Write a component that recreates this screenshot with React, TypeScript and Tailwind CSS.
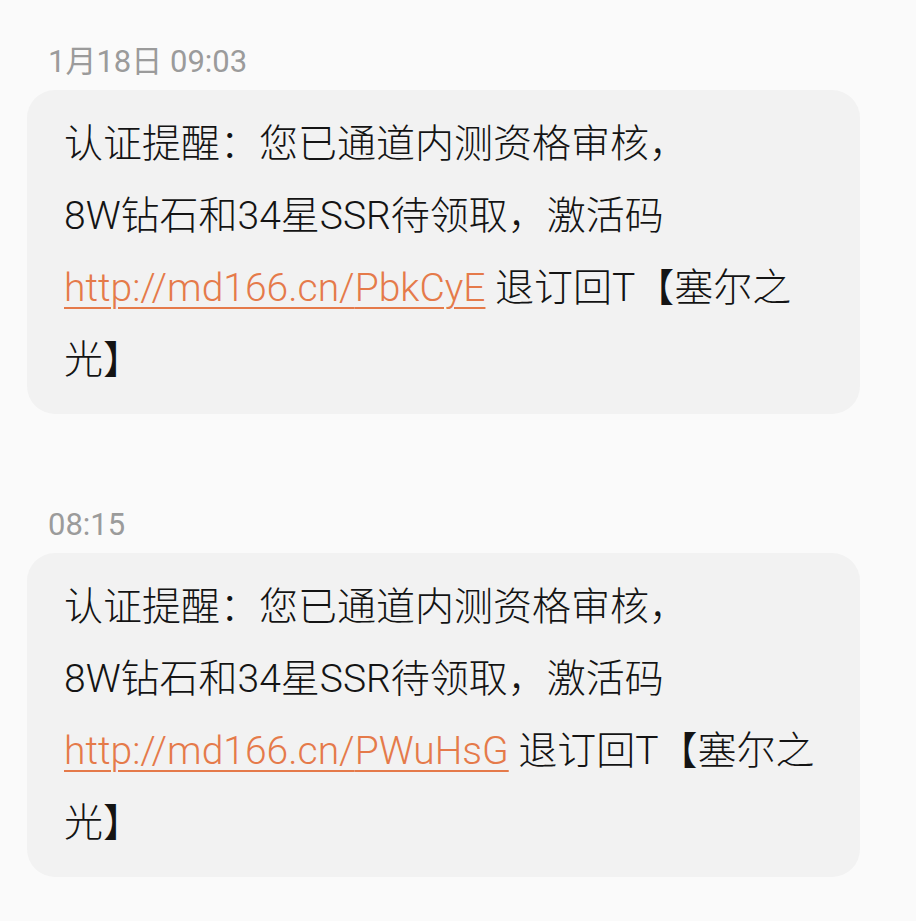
const messages = [
  { time: "1月18日 09:03", code: "PbkCyE" },
  { time: "08:15", code: "PWuHsG" },
];

function Bubble({ code }: { code: string }) {
  return (
    <div className="w-[833px] rounded-[28px] bg-[#f2f2f2] px-[37px] py-[18px] text-[39px] font-light leading-[72px] whitespace-nowrap text-[#141414]">
      <div>认证提醒：您已通道内测资格审核，</div>
      <div>8W钻石和34星SSR待领取，激活码</div>
      <div>
        <span className="text-[#e57a4a] underline decoration-2 underline-offset-[6px]">
          http://md166.cn/{code}
        </span>{" "}
        退订回T【塞尔之
      </div>
      <div>光】</div>
    </div>
  );
}

export default function App() {
  return (
    <div
      className="min-h-screen bg-[#fafafa] pl-[27px] pt-[42px]"
      style={{ fontFamily: 'Roboto, "Noto Sans CJK SC", sans-serif' }}
    >
      {messages.map((m, i) => (
        <div key={i} className={i > 0 ? "mt-[91px]" : ""}>
          <div className="pl-[21px] text-[31px] leading-[40px] text-[#9b9b9b]">{m.time}</div>
          <div className="mt-[8px]">
            <Bubble code={m.code} />
          </div>
        </div>
      ))}
    </div>
  );
}
